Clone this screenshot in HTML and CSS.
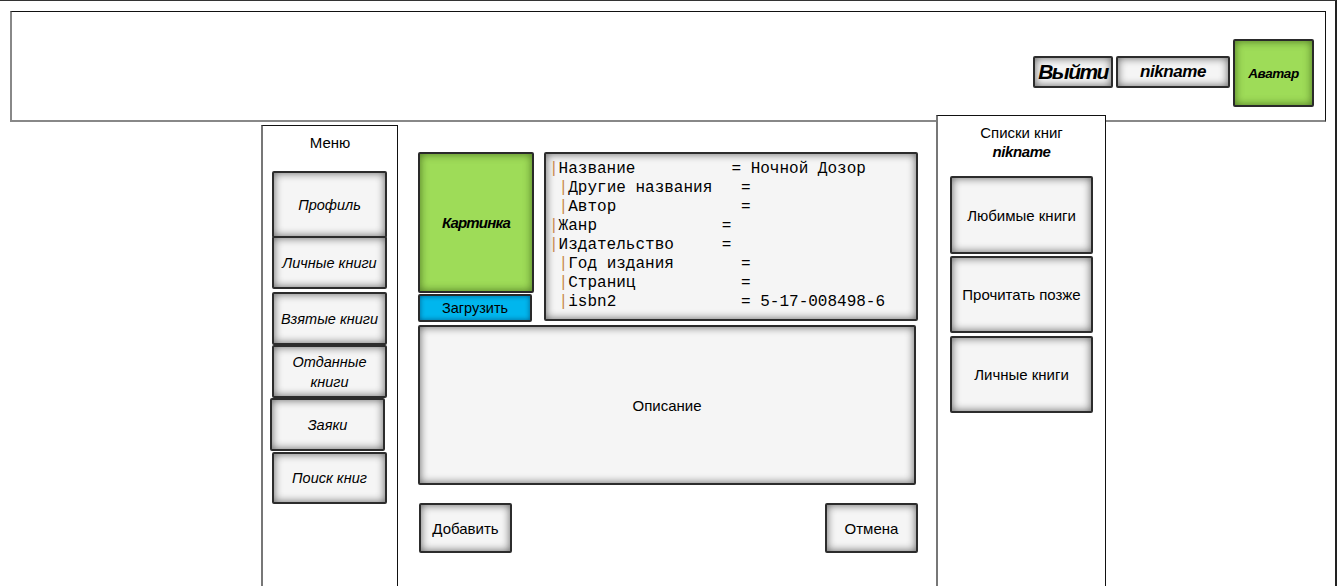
FILE: index.html
```html
<!DOCTYPE html>
<html lang="ru">
<head>
<meta charset="utf-8">
<title>Книги</title>
<link rel="stylesheet" href="styles.css">
</head>
<body>
<div class="frame">
  <header class="header">
    <div class="btn btn-logout">Выйти</div>
    <div class="btn btn-nick">nikname</div>
    <div class="avatar">Аватар</div>
  </header>
  <div class="main">
    <nav class="menu">
      <div class="panel-title">Меню</div>
      <div class="btn menu-item">Профиль</div>
      <div class="btn menu-item">Личные книги</div>
      <div class="btn menu-item">Взятые книги</div>
      <div class="btn menu-item">Отданные<br>книги</div>
      <div class="btn menu-item">Заяки</div>
      <div class="btn menu-item">Поиск книг</div>
    </nav>
    <section class="content">
      <div class="top-row">
        <div class="pic-col">
          <div class="picture">Картинка</div>
          <div class="upload">Загрузить</div>
        </div>
        <pre class="info btn"><span class="bar">|</span>Название          = Ночной Дозор
 <span class="bar">|</span>Другие названия   =
 <span class="bar">|</span>Автор             =
<span class="bar">|</span>Жанр             =
<span class="bar">|</span>Издательство     =
 <span class="bar">|</span>Год издания       =
 <span class="bar">|</span>Страниц           =
 <span class="bar">|</span>isbn2             = 5-17-008498-6</pre>
      </div>
      <div class="btn description">Описание</div>
      <div class="actions">
        <div class="btn action">Добавить</div>
        <div class="btn action">Отмена</div>
      </div>
    </section>
    <aside class="lists">
      <div class="lists-title">Списки книг</div>
      <div class="lists-nick">nikname</div>
      <div class="btn list-item">Любимые книги</div>
      <div class="btn list-item">Прочитать позже</div>
      <div class="btn list-item">Личные книги</div>
    </aside>
  </div>
</div>
</body>
</html>
```
FILE: styles.css
```css
* { box-sizing: border-box; }
html, body { margin: 0; padding: 0; background: #fff; }
body {
  width: 1337px;
  height: 586px;
  overflow: hidden;
  font-family: "Liberation Sans", Arial, sans-serif;
  font-size: 14px;
  color: #000;
}
.frame {
  width: 1337px;
  height: 586px;
  border-top: 1px solid #333;
  border-right: 2px solid #222;
  overflow: hidden;
}
.btn {
  background: #f5f5f5;
  border: 2px solid #2c2c2c;
  border-radius: 2px;
  box-shadow: inset 0 0 9px rgba(0,0,0,0.6);
  display: flex;
  align-items: center;
  justify-content: center;
  text-align: center;
}
.header {
  margin: 10px 0 0 10px;
  width: 1316px;
  height: 111px;
  border: 1px solid #111;
  border-left: 2px solid #888;
  border-bottom: 2px solid #888;
  display: flex;
  justify-content: flex-end;
  align-items: flex-start;
  padding: 27px 11px 0 0;
  gap: 3px;
}
.btn-logout {
  margin-top: 17px;
  width: 80px;
  height: 32px;
  font-size: 21px;
  font-style: italic;
  font-weight: bold;
  letter-spacing: -1.6px;
}
.btn-nick {
  margin-top: 17px;
  width: 114px;
  height: 32px;
  font-size: 17px;
  font-style: italic;
  font-weight: bold;
  letter-spacing: -0.4px;
}
.avatar {
  width: 81px;
  height: 68px;
  background: #9edc58;
  border: 2px solid #2a2a2a;
  border-radius: 2px;
  box-shadow: inset 0 0 8px rgba(40,70,10,0.7);
  display: flex;
  align-items: center;
  justify-content: center;
  font-size: 13.5px;
  font-style: italic;
  font-weight: bold;
  letter-spacing: -0.4px;
}
.main {
  display: flex;
  align-items: flex-start;
  padding-left: 261px;
}
.menu {
  margin-top: 3px;
  width: 137px;
  height: 470px;
  border: 1px solid #111;
  border-left: 2px solid #777;
  display: flex;
  flex-direction: column;
  align-items: flex-start;
  padding: 8px 0 0 9px;
}
.panel-title {
  align-self: stretch;
  text-align: center;
  font-size: 15px;
  line-height: 18px;
  margin-left: -9px;
}
.menu-item {
  width: 115px;
  height: 53px;
  font-style: italic;
  font-size: 14.5px;
  line-height: 20px;
}
.menu-item:nth-child(2) { margin-top: 19px; height: 67px; }
.menu-item:nth-child(3) { margin-top: -2px; }
.menu-item:nth-child(4) { margin-top: 3px; }
.menu-item:nth-child(5) { margin-top: 0; }
.menu-item:nth-child(6) { margin-top: 0; margin-left: -2px; }
.menu-item:nth-child(7) { margin-top: 1px; height: 52px; }
.content {
  margin: 30px 0 0 20px;
  width: 500px;
  display: flex;
  flex-direction: column;
}
.top-row {
  display: flex;
  gap: 10px;
}
.pic-col {
  display: flex;
  flex-direction: column;
  gap: 1px;
}
.picture {
  width: 116px;
  height: 141px;
  background: #9edc58;
  border: 2px solid #2a2a2a;
  border-radius: 2px;
  box-shadow: inset 0 0 8px rgba(40,70,10,0.7);
  display: flex;
  align-items: center;
  justify-content: center;
  font-size: 15px;
  font-style: italic;
  font-weight: bold;
  letter-spacing: -0.8px;
}
.upload {
  width: 114px;
  height: 28px;
  background: #00b6ee;
  border: 2px solid #2a2a2a;
  border-radius: 2px;
  box-shadow: inset 0 0 5px rgba(0,40,80,0.6);
  display: flex;
  align-items: center;
  justify-content: center;
  font-size: 14.5px;
}
.info {
  margin: 0;
  width: 374px;
  height: 169px;
  display: block;
  text-align: left;
  padding: 6px 0 0 3px;
  font-family: "Liberation Mono", "Courier New", monospace;
  font-size: 16px;
  line-height: 19px;
  color: #000;
  white-space: pre;
}
.bar { color: #c98a4e; }
.description {
  margin-top: 3px;
  width: 498px;
  height: 160px;
  font-size: 15px;
}
.actions {
  margin-top: 18px;
  display: flex;
  justify-content: space-between;
  padding-left: 1px;
}
.action {
  width: 93px;
  height: 50px;
  font-size: 15px;
}
.lists {
  position: relative;
  z-index: 1;
  background: #fff;
  margin: -7px 0 0 18px;
  width: 170px;
  height: 480px;
  border: 1px solid #111;
  border-left: 2px solid #777;
  display: flex;
  flex-direction: column;
  align-items: flex-start;
  padding: 7px 0 0 12px;
}
.lists-title, .lists-nick {
  align-self: stretch;
  text-align: center;
  margin-left: -12px;
  font-size: 15px;
  line-height: 19px;
}
.lists-nick {
  font-style: italic;
  font-weight: bold;
  letter-spacing: -0.4px;
}
.list-item {
  width: 143px;
  height: 77px;
  font-size: 15px;
}
.list-item:nth-child(3) { margin-top: 15px; height: 78px; }
.list-item:nth-child(4) { margin-top: 2px; }
.list-item:nth-child(5) { margin-top: 3px; }
```
